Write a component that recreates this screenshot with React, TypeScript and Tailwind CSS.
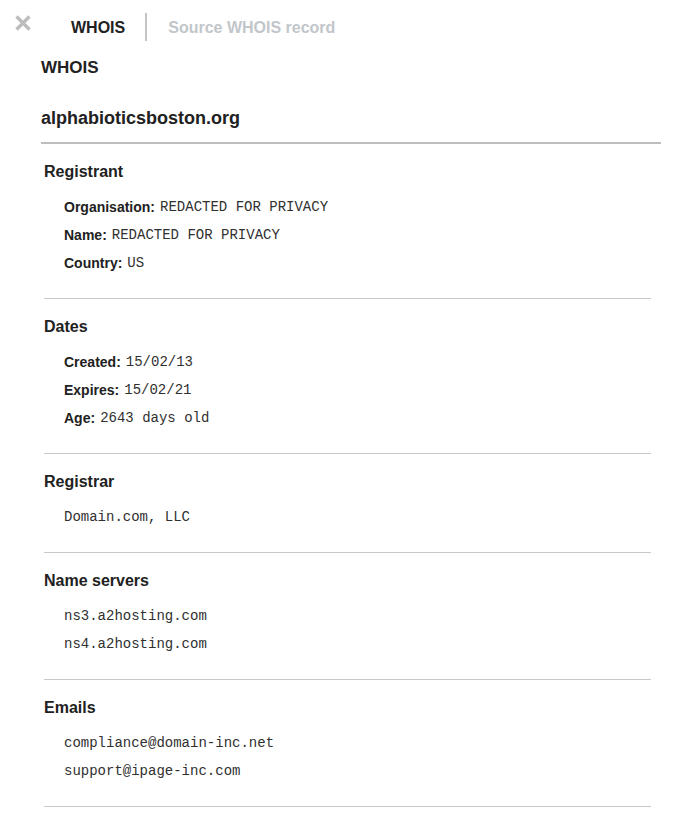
import React from 'react';

type Row = { label?: string; value: string };

const SECTIONS: { title: string; rows: Row[] }[] = [
  {
    title: 'Registrant',
    rows: [
      { label: 'Organisation', value: 'REDACTED FOR PRIVACY' },
      { label: 'Name', value: 'REDACTED FOR PRIVACY' },
      { label: 'Country', value: 'US' },
    ],
  },
  {
    title: 'Dates',
    rows: [
      { label: 'Created', value: '15/02/13' },
      { label: 'Expires', value: '15/02/21' },
      { label: 'Age', value: '2643 days old' },
    ],
  },
  { title: 'Registrar', rows: [{ value: 'Domain.com, LLC' }] },
  { title: 'Name servers', rows: [{ value: 'ns3.a2hosting.com' }, { value: 'ns4.a2hosting.com' }] },
  { title: 'Emails', rows: [{ value: 'compliance@domain-inc.net' }, { value: 'support@ipage-inc.com' }] },
];

const sans = "font-['Liberation_Sans','Roboto',sans-serif]";
const mono = "font-['Liberation_Mono','DejaVu_Sans_Mono',monospace]";

export default function App() {
  return (
    <div className={`w-[677px] min-h-[819px] bg-white text-[#212121] ${sans}`}>
      {/* Tabs */}
      <div className="flex items-center h-[54px]">
        <button className="ml-[14px] w-[18px] h-[18px] -mt-[8px] flex items-center justify-center">
          <svg width="18" height="18" viewBox="0 0 18 18">
            <path d="M2.5 2.5 L15.5 15.5 M15.5 2.5 L2.5 15.5" stroke="#bdbdbd" strokeWidth="3.4" strokeLinecap="butt" />
          </svg>
        </button>
        <span className="ml-[39px] mt-[2px] text-[16px] font-bold leading-6">WHOIS</span>
        <span className="ml-[20px] w-[2px] h-[28px] bg-[#c4c4c4]"></span>
        <span className="ml-[21px] mt-[2px] text-[16px] font-bold leading-6 text-[#c2c6ca]">Source WHOIS record</span>
      </div>

      <div className="pl-[41px] pr-[16px]">
        <h2 className="pt-[2px] text-[17px] font-bold leading-6">WHOIS</h2>
        <h1 className="mt-[25px] pb-[11px] text-[18px] font-bold leading-[26px] border-b-2 border-[#bdbdbd]">
          alphabioticsboston.org
        </h1>

        <div className="ml-[3px] mr-[10px]">
          {SECTIONS.map((s) => (
            <div key={s.title} className="pt-[16px] pb-[21px] border-b border-[#c8c8c8]">
              <h3 className="text-[16px] font-bold leading-6">{s.title}</h3>
              <div className="mt-[9px] pl-[20px]">
                {s.rows.map((r, i) => (
                  <div key={i} className="h-[28px] flex items-center text-[14px]">
                    {r.label && <span className="font-bold mr-[5px]">{r.label}:</span>}
                    <span className={`${mono} text-[#303030]`}>{r.value}</span>
                  </div>
                ))}
              </div>
            </div>
          ))}
        </div>
      </div>
    </div>
  );
}
